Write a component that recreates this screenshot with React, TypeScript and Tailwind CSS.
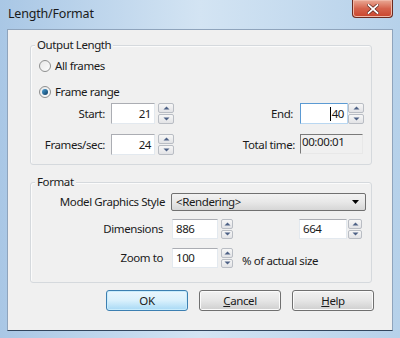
import React from 'react';

const font = { fontFamily: '"Noto Sans", "Open Sans", sans-serif' };

function Spinner({ w = 'w-[16px]' }: { w?: string }) {
  // two tiny stacked buttons with arrow triangles
  return (
    <div className={`flex flex-col h-full ${w} gap-px`}>
      {['up', 'down'].map((dir) => (
        <div
          key={dir}
          className="flex-1 flex items-center justify-center border border-[#b9bdc4] rounded-[2px] bg-gradient-to-b from-[#f7f7f7] to-[#e2e3e6]"
        >
          <svg width="7" height="4" viewBox="0 0 7 4">
            {dir === 'up' ? (
              <path d="M0.5 3.5 L3.5 0.5 L6.5 3.5 Z" fill="#4d6185" />
            ) : (
              <path d="M0.5 0.5 L3.5 3.5 L6.5 0.5 Z" fill="#4d6185" />
            )}
          </svg>
        </div>
      ))}
    </div>
  );
}

function Radio({ checked }: { checked?: boolean }) {
  return (
    <div className="w-[12px] h-[12px] rounded-full border border-[#8e8f8f] bg-gradient-to-br from-[#e8e8e8] to-[#fcfcfc] flex items-center justify-center">
      {checked && (
        <div className="w-[6px] h-[6px] rounded-full bg-gradient-to-br from-[#4ea3d8] to-[#0d3d63]" />
      )}
    </div>
  );
}

function GroupBox({ title, className, children }: { title: string; className: string; children: React.ReactNode }) {
  return (
    <div className={`relative border border-[#d5d9dd] rounded-[3px] ml-[22px] w-[342px] shadow-[inset_1px_1px_0_#fbfbfb] ${className}`}>
      <span className="absolute -top-[9px] left-[4px] px-[2px] bg-[#f0f0f0] leading-[16px]">{title}</span>
      {children}
    </div>
  );
}

function Button({ children, primary }: { children: React.ReactNode; primary?: boolean }) {
  return (
    <div
      className={`w-[82px] h-[21px] flex items-center justify-center rounded-[3px] border leading-none ${
        primary
          ? 'border-[#3c7fb1] bg-gradient-to-b from-[#eaf6fd] via-[#d9f0fc] to-[#a7d9f5] shadow-[inset_0_0_0_1px_#c9ecfc]'
          : 'border-[#707070] bg-gradient-to-b from-[#f2f2f2] via-[#e6e6e6] to-[#cfcfcf] shadow-[inset_0_0_0_1px_#fbfbfb]'
      }`}
    >
      {children}
    </div>
  );
}

export default function App() {
  return (
    <div
      className="w-[400px] h-[338px] flex flex-col text-[11.5px] tracking-[-0.4px] text-[#1a1a1a] bg-gradient-to-r from-[#a9c7e5] via-[#d3e4f3] to-[#b6d1ea] overflow-hidden"
      style={font}
    >
      {/* Title bar */}
      <div className="h-[29px] flex items-start justify-between shrink-0">
        <span className="ml-[8px] mt-[6px] text-[12.5px] tracking-[-0.2px] leading-[16px]">Length/Format</span>
        <div className="mr-[7px] w-[41px] h-[18px] rounded-b-[4px] border border-t-0 border-[#6b2a20] bg-gradient-to-b from-[#e9a996] via-[#d5634d] to-[#c9442c] flex items-center justify-center shadow-[inset_0_0_0_1px_#f0b8a8]">
          <svg width="12" height="10" viewBox="0 0 12 10">
            <path d="M1.5 1 L10.5 9 M10.5 1 L1.5 9" stroke="#5a2018" strokeWidth="3.2" strokeLinecap="square" />
            <path d="M1.5 1 L10.5 9 M10.5 1 L1.5 9" stroke="#ffffff" strokeWidth="1.8" strokeLinecap="square" />
          </svg>
        </div>
      </div>

      {/* Client area */}
      <div className="mx-[7px] mb-[7px] flex-1 border border-[#8fa4bc] border-b-[#32465e] bg-[#f0f0f0] flex flex-col">
        <GroupBox title="Output Length" className="mt-[15px] h-[120px]">
          <div className="flex flex-col">
            <div className="mt-[12px] h-[16px] pl-[8px] flex items-center gap-[4px]">
              <Radio />
              <span>All frames</span>
            </div>
            <div className="mt-[10px] h-[16px] pl-[8px] flex items-center gap-[4px]">
              <Radio checked />
              <span>Frame range</span>
            </div>
            <div className="mt-[3px] h-[21px] flex items-center">
              <span className="w-[74px] text-right">Start:</span>
              <div className="ml-[6px] w-[44px] h-full bg-white border border-[#abadb3] border-r-[#e3e9ef] border-b-[#e3e9ef] flex items-center justify-end pr-[3px]">21</div>
              <div className="ml-[3px] h-full"><Spinner /></div>
              <span className="flex-1 text-right">End:</span>
              <div className="ml-[7px] w-[48px] h-full bg-white border border-[#5b9ad3] border-r-[#b9d7f1] border-b-[#b9d7f1] flex items-center justify-end pr-[3px]">
                <span className="w-px h-[14px] bg-black mr-px" />
                40
              </div>
              <div className="h-full"><Spinner /></div>
              <div className="w-[7px]" />
            </div>
            <div className="mt-[10px] h-[21px] flex items-center">
              <span className="w-[74px] text-right">Frames/sec:</span>
              <div className="ml-[6px] w-[44px] h-full bg-white border border-[#abadb3] border-r-[#e3e9ef] border-b-[#e3e9ef] flex items-center justify-end pr-[3px]">24</div>
              <div className="ml-[3px] h-full"><Spinner /></div>
              <span className="flex-1 text-right">Total time:</span>
              <div className="ml-[5px] w-[63px] h-[20px] self-start border border-[#7a7a7a] border-r-[#e8e8e8] border-b-[#e8e8e8] leading-[14px] pl-px">00:00:01</div>
              <div className="w-[8px]" />
            </div>
          </div>
        </GroupBox>

        <GroupBox title="Format" className="mt-[17px] h-[101px]">
          <div className="flex flex-col">
            <div className="mt-[10px] h-[18px] flex items-center">
              <span className="w-[134px] text-right">Model Graphics Style</span>
              <div className="ml-[6px] w-[195px] h-full rounded-[2px] border border-[#707070] bg-gradient-to-b from-[#f2f2f2] via-[#e8e8e8] to-[#d6d6d6] flex items-center pl-[4px] pr-[6px]">
                <span className="flex-1">&lt;Rendering&gt;</span>
                <svg width="7" height="4" viewBox="0 0 7 4"><path d="M0 0 L7 0 L3.5 4 Z" fill="#000" /></svg>
              </div>
            </div>
            <div className="mt-[8px] h-[20px] flex items-center">
              <span className="w-[132px] text-right">Dimensions</span>
              <div className="ml-[9px] w-[46px] h-full bg-white border border-[#e3e9ef] border-t-[#abadb3] flex items-center pl-[3px]">886</div>
              <div className="ml-[3px] h-full"><Spinner w="w-[12px]" /></div>
              <div className="flex-1" />
              <div className="w-[48px] h-full bg-white border border-[#e3e9ef] border-t-[#abadb3] flex items-center pl-[3px]">664</div>
              <div className="ml-px h-full"><Spinner w="w-[14px]" /></div>
              <div className="w-[9px]" />
            </div>
            <div className="mt-[9px] h-[20px] flex items-center">
              <span className="w-[132px] text-right">Zoom to</span>
              <div className="ml-[9px] w-[46px] h-full bg-white border border-[#e3e9ef] border-t-[#abadb3] flex items-center pl-[3px]">100</div>
              <div className="ml-[3px] h-full"><Spinner w="w-[12px]" /></div>
              <span className="ml-[9px] mt-[5px]">% of actual size</span>
            </div>
          </div>
        </GroupBox>

        <div className="mt-[7px] mr-[18px] flex justify-end gap-[11px]">
          <Button primary>OK</Button>
          <Button>
            <span><span className="underline">C</span>ancel</span>
          </Button>
          <Button>
            <span><span className="underline">H</span>elp</span>
          </Button>
        </div>
      </div>
    </div>
  );
}
